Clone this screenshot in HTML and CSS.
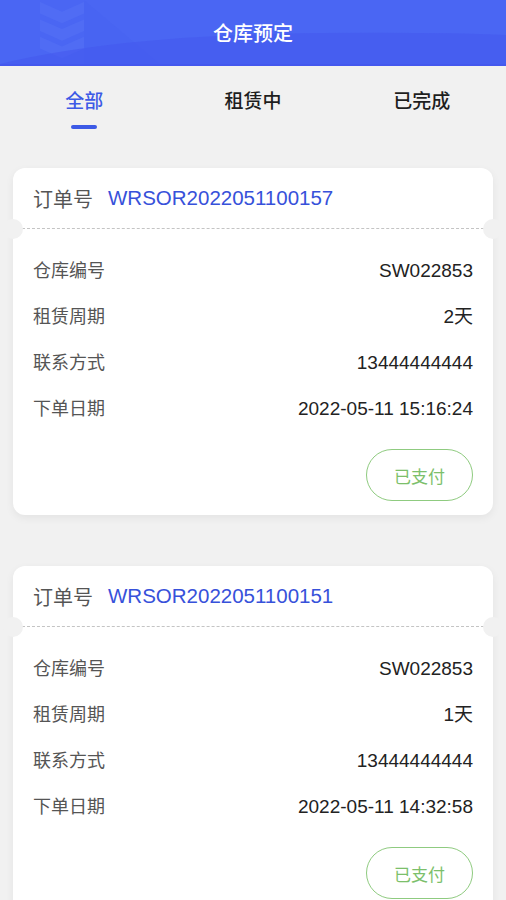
FILE: index.html
```html
<!DOCTYPE html>
<html lang="zh-CN">
<head>
  <meta charset="UTF-8">
  <meta name="viewport" content="width=device-width, initial-scale=1.0">
  <title>仓库预定</title>
  <link rel="stylesheet" href="styles.css">
</head>
<body>
  <header class="topbar">
    <svg class="topbar-deco" viewBox="0 0 506 66" preserveAspectRatio="none" aria-hidden="true">
      <path d="M40 2 L62 12 L84 2 L84 14 L62 24 L40 14 Z M40 20 L62 30 L84 20 L84 32 L62 42 L40 32 Z M40 38 L62 48 L84 38 L84 50 L62 60 L40 50 Z" fill="#6a86f8" opacity="0.2"/>
      <path d="M84 0 L160 66 L84 66 Z" fill="#4762f1" opacity="0.4"/>
      <path d="M0 66 Q120 36 320 34 Q440 33 506 36 L506 66 Z" fill="#4558ee" opacity="0.6"/>
    </svg>
    <h1 class="topbar-title">仓库预定</h1>
  </header>

  <nav class="tabs">
    <div class="tab active">全部<span class="tab-line"></span></div>
    <div class="tab">租赁中</div>
    <div class="tab">已完成</div>
  </nav>

  <main class="list">
    <section class="card">
      <div class="card-head">
        <span class="order-label">订单号</span>
        <span class="order-no">WRSOR2022051100157</span>
      </div>
      <div class="divider"></div>
      <div class="card-body">
        <div class="row"><span class="label">仓库编号</span><span class="value">SW022853</span></div>
        <div class="row"><span class="label">租赁周期</span><span class="value">2天</span></div>
        <div class="row"><span class="label">联系方式</span><span class="value">13444444444</span></div>
        <div class="row"><span class="label">下单日期</span><span class="value">2022-05-11 15:16:24</span></div>
        <div class="actions"><span class="status">已支付</span></div>
      </div>
    </section>

    <section class="card">
      <div class="card-head">
        <span class="order-label">订单号</span>
        <span class="order-no">WRSOR2022051100151</span>
      </div>
      <div class="divider"></div>
      <div class="card-body">
        <div class="row"><span class="label">仓库编号</span><span class="value">SW022853</span></div>
        <div class="row"><span class="label">租赁周期</span><span class="value">1天</span></div>
        <div class="row"><span class="label">联系方式</span><span class="value">13444444444</span></div>
        <div class="row"><span class="label">下单日期</span><span class="value">2022-05-11 14:32:58</span></div>
        <div class="actions"><span class="status">已支付</span></div>
      </div>
    </section>
  </main>
</body>
</html>
```

FILE: styles.css
```css
* { box-sizing: border-box; }
body {
  margin: 0;
  background-color: #f1f1f1;
  font-family: "Liberation Sans", "Noto Sans CJK SC", sans-serif;
  color: #222;
}
.topbar {
  position: relative;
  height: 66px;
  background-color: #4a66f3;
  display: flex;
  align-items: center;
  justify-content: center;
  overflow: hidden;
  border-bottom: 2px solid #4458ee;
}
.topbar-deco {
  position: absolute;
  left: 0; top: 0;
  width: 100%; height: 100%;
}
.topbar-title {
  position: relative;
  margin: 0;
  color: #fff;
  font-size: 20px;
  font-weight: 500;
  font-family: "Noto Sans CJK SC", sans-serif;
}
.tabs {
  display: flex;
  height: 74px;
  padding-top: 20px;
}
.tab {
  flex: 1;
  display: flex;
  flex-direction: column;
  align-items: center;
  font-size: 19px;
  font-weight: 500;
  line-height: 28px;
  color: #1e1e1e;
  font-family: "Noto Sans CJK SC", sans-serif;
}
.tab.active { color: #3d5ae6; }
.tab-line {
  width: 26px;
  height: 4px;
  margin-top: 11px;
  border-radius: 2px;
  background-color: #3d5ae6;
}
.list {
  padding: 28px 13px 0;
  display: flex;
  flex-direction: column;
  gap: 51px;
}
.card {
  background-color: #fff;
  border-radius: 12px;
  box-shadow: 0 3px 8px rgba(0, 0, 0, 0.06);
}
.card-head {
  height: 60px;
  display: flex;
  align-items: center;
  padding: 0 20px;
  font-size: 20px;
}
.order-label {
  color: #555;
  font-family: "Noto Sans CJK SC", sans-serif;
  margin-right: 15px;
}
.order-no {
  color: #3751da;
  font-size: 20.5px;
}
.divider {
  position: relative;
  margin: 0 9px;
  border-top: 1px dashed #c4c4c4;
}
.divider::before,
.divider::after {
  content: "";
  position: absolute;
  top: -10px;
  width: 20px;
  height: 20px;
  border-radius: 50%;
  background-color: #f1f1f1;
}
.divider::before { left: -19px; }
.divider::after { right: -19px; }
.card-body {
  padding: 17px 20px 14px;
}
.row {
  height: 46px;
  display: flex;
  align-items: baseline;
  justify-content: space-between;
  line-height: 46px;
  font-size: 19px;
}
.label {
  color: #555;
  font-family: "Noto Sans CJK SC", sans-serif;
  font-size: 18px;
}
.value { color: #222; }
.actions {
  display: flex;
  justify-content: flex-end;
  margin-top: 19px;
}
.status {
  width: 107px;
  height: 52px;
  display: flex;
  align-items: center;
  justify-content: center;
  border: 1.5px solid #8fcb80;
  border-radius: 26px;
  color: #7cbf6b;
  font-size: 17px;
  font-family: "Noto Sans CJK SC", sans-serif;
}
```
